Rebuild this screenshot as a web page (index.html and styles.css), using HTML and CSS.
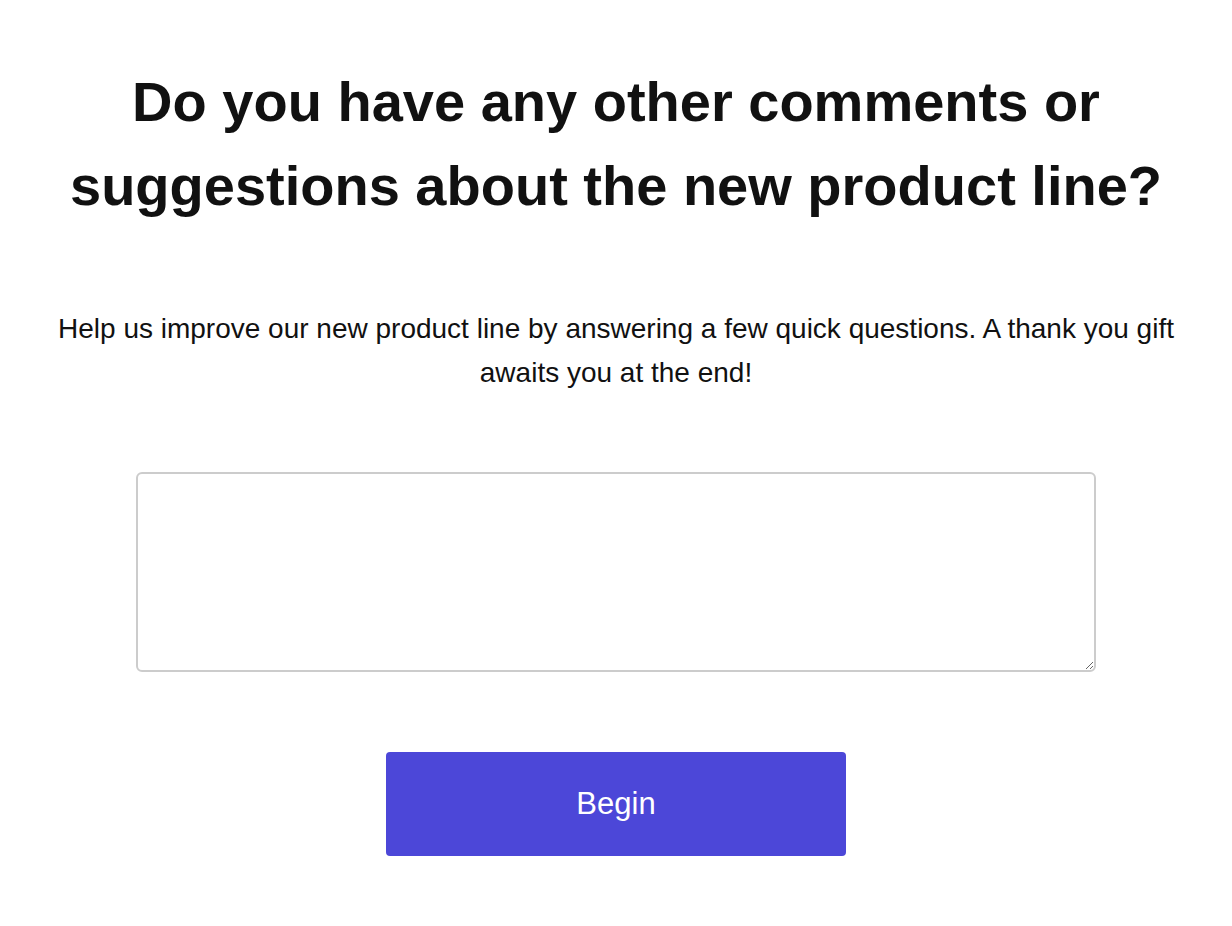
FILE: index.html
```html
<!DOCTYPE html>
<html lang="en">
<head>
    <meta charset="UTF-8">
    <meta name="viewport" content="width=device-width, initial-scale=1.0">
    <title>Product Survey</title>
    <link rel="stylesheet" href="styles.css">
</head>
<body>
    <main class="survey">
        <h1 class="question">Do you have any other comments or suggestions about the new product line?</h1>
        <p class="intro">Help us improve our new product line by answering a few quick questions. A thank you gift awaits you at the end!</p>
        <textarea class="answer"></textarea>
        <button class="begin-button">Begin</button>
    </main>
</body>
</html>
```

FILE: styles.css
```css
* {
    margin: 0;
    padding: 0;
    box-sizing: border-box;
}

body {
    font-family: 'Liberation Sans', Arial, sans-serif;
    background: #fff;
    color: #111;
}

.survey {
    display: flex;
    flex-direction: column;
    align-items: center;
    padding: 60px 40px 60px;
    text-align: center;
}

.question {
    font-size: 56px;
    font-weight: 700;
    line-height: 84px;
    color: #111;
}

.intro {
    margin-top: 79px;
    font-size: 28px;
    line-height: 44px;
    color: #111;
}

.answer {
    margin-top: 77px;
    width: 960px;
    height: 200px;
    border: 2px solid #ccc;
    border-radius: 6px;
    background: #fff;
    font-family: inherit;
    font-size: 18px;
    padding: 10px;
    resize: vertical;
}

.begin-button {
    margin-top: 80px;
    width: 460px;
    height: 104px;
    border: none;
    border-radius: 4px;
    background: #4c47d8;
    color: #fff;
    font-family: inherit;
    font-size: 31px;
    cursor: pointer;
}
```
